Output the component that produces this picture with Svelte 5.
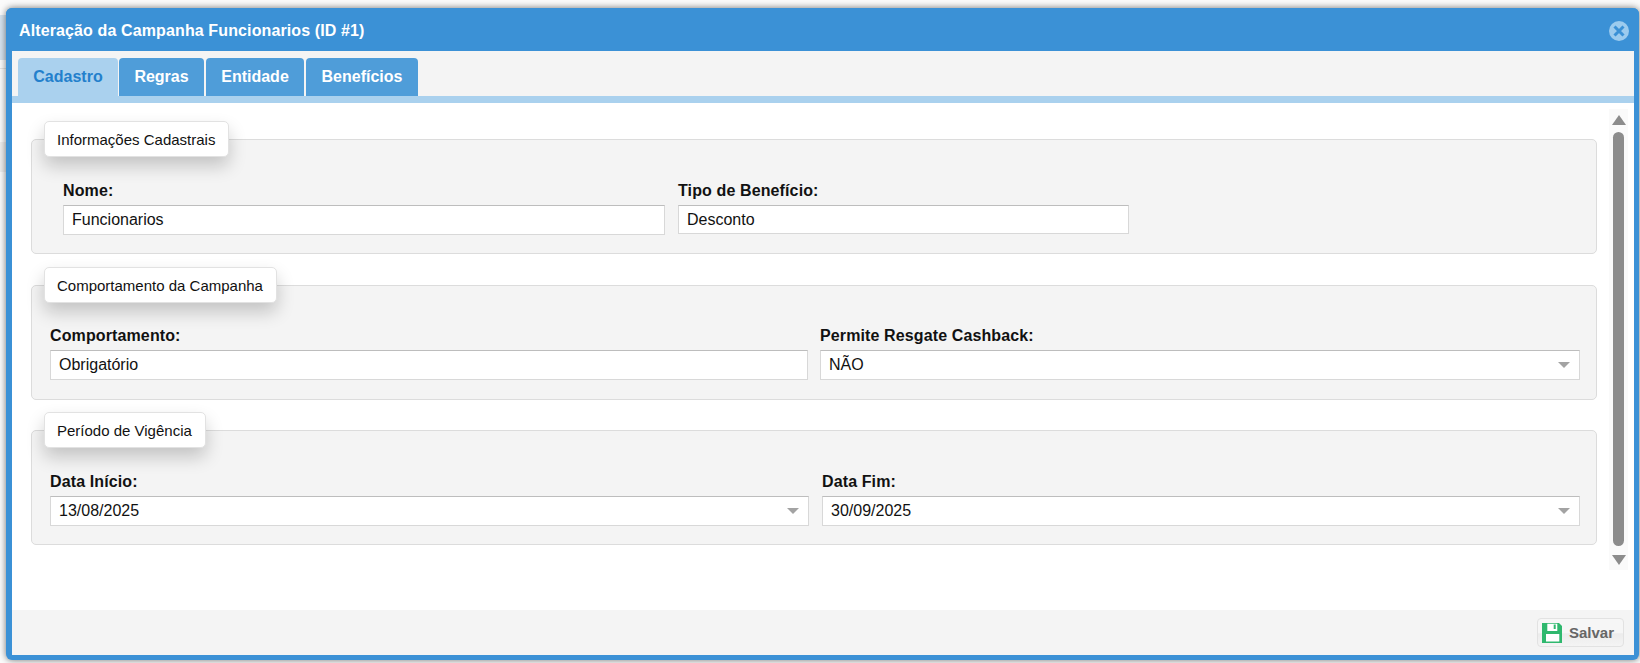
<script lang="ts">
  const tabs = ["Cadastro", "Regras", "Entidade", "Benefícios"];
  let active = $state("Cadastro");
</script>

<div class="page">
  <div class="backdrop left" aria-hidden="true">
    <i class="b1"></i><i class="b2"></i><i class="b3"></i>
  </div>
  <section class="dialog">
    <header class="title-bar">
      <span>Alteração da Campanha Funcionarios (ID #1)</span>
      <button class="close" aria-label="Fechar">
        <svg viewBox="0 0 20 20" width="20" height="20">
          <circle cx="10" cy="10" r="10" fill="#9ccbee" />
          <path d="M5.500 5.500l9 9M14.500 5.500l-9 9" stroke="#3b91d6" stroke-width="3" />
        </svg>
      </button>
    </header>

    <nav class="tabs">
      {#each tabs as tab}
        <button class="tab" class:active={active === tab} onclick={() => (active = tab)}>{tab}</button>
      {/each}
    </nav>

    <div class="body">
      <div class="forms">
        <div class="group first">
          <div class="legend">Informações Cadastrais</div>
          <div class="row inset">
            <div class="field nome">
              <span class="label">Nome:</span>
              <div class="input">Funcionarios</div>
            </div>
            <div class="field tipo">
              <span class="label">Tipo de Benefício:</span>
              <div class="input short">Desconto</div>
            </div>
          </div>
        </div>

        <div class="group second">
          <div class="legend">Comportamento da Campanha</div>
          <div class="row">
            <div class="field comp">
              <span class="label">Comportamento:</span>
              <div class="input">Obrigatório</div>
            </div>
            <div class="field half">
              <span class="label">Permite Resgate Cashback:</span>
              <div class="input select">NÃO<i class="caret"></i></div>
            </div>
          </div>
        </div>

        <div class="group third">
          <div class="legend">Período de Vigência</div>
          <div class="row">
            <div class="field date">
              <span class="label">Data Início:</span>
              <div class="input select">13/08/2025<i class="caret"></i></div>
            </div>
            <div class="field date-end">
              <span class="label">Data Fim:</span>
              <div class="input select">30/09/2025<i class="caret"></i></div>
            </div>
          </div>
        </div>
      </div>

      <div class="scrollbar" aria-hidden="true">
        <i class="arrow up"></i>
        <div class="thumb"></div>
        <i class="arrow down"></i>
      </div>
    </div>

    <footer class="actions">
      <button class="save">
        <svg viewBox="0 0 20 20" width="20" height="20">
          <path fill="#2fb86e" d="M0 0h17l3 3v17H0z" />
          <path fill="#fff" d="M5.300 .8h10v7.200h-10zM4 11h13.300v7.500H4z" />
          <path fill="#2fb86e" d="M11.700 1.500h2v4.500h-2z" />
        </svg>
        <span>Salvar</span>
      </button>
    </footer>
  </section>
</div>

<style>
  :global(body) {
    margin: 0;
    background: #fbfbfb;
    font-family: "Liberation Sans", Arial, sans-serif;
  }

  .page {
    height: 663px;
    box-sizing: border-box;
    padding: 8px 1px 3px 6px;
    position: relative;
    overflow: hidden;
  }

  /* what little of the page behind the dialog still shows on the left */
  .backdrop {
    position: absolute;
    left: 0;
    top: 0;
    width: 6px;
    height: 663px;
  }

  .backdrop i {
    position: absolute;
    left: 0;
    width: 6px;
  }

  .b1 { top: 15px; height: 45px; background: #d5e3ef; }
  .b2 { top: 68px; height: 1px; background: #e4e4e4; }
  .b3 { top: 142px; height: 30px; background: #eeeeee; }

  .dialog {
    position: relative;
    height: 652px;
    box-sizing: border-box;
    display: flex;
    flex-direction: column;
    border: solid #3b91d6;
    border-width: 0 5px 5px 6px;
    border-radius: 6px;
    background: #fff;
    box-shadow: 0 0 7px rgba(0, 0, 0, 0.55);
  }

  .title-bar {
    height: 43px;
    box-sizing: border-box;
    margin: 0 -5px 0 -6px;
    padding: 3px 10px 0 13px;
    display: flex;
    align-items: center;
    justify-content: space-between;
    background: #3b91d6;
    border-radius: 6px 6px 0 0;
    color: #fff;
    font-size: 16px;
    font-weight: bold;
    letter-spacing: 0.12px;
  }

  .close {
    display: block;
    width: 20px;
    height: 20px;
    padding: 0;
    border: 0;
    background: none;
  }

  .tabs {
    height: 45px;
    box-sizing: border-box;
    padding: 7px 0 0 6px;
    display: flex;
    gap: 1px;
    background: #f4f4f4;
  }

  .tab {
    padding: 0;
    border: 0;
    border-radius: 4px 4px 0 0;
    background: #4f9dd9;
    color: #fff;
    font: bold 16px "Liberation Sans", Arial, sans-serif;
  }

  .tab:nth-child(1) { width: 100px; }
  .tab:nth-child(2) { width: 85px; }
  .tab:nth-child(3) { width: 98px; margin-left: 1px; }
  .tab:nth-child(4) { width: 112px; margin-left: 1px; }

  .tab.active {
    background: #aad1ee;
    color: #2380cc;
  }

  .body {
    height: 514px;
    box-sizing: border-box;
    border-top: 7px solid #aad1ee;
    display: flex;
  }

  .forms {
    width: 1585px;
    box-sizing: border-box;
    padding-left: 19px;
  }

  .group {
    width: 1566px;
    height: 115px;
    box-sizing: border-box;
    margin-top: 31px;
    border: 1px solid #dcdcdc;
    border-radius: 5px;
    background: #f4f4f4;
  }

  .group.first {
    margin-top: 36px;
  }

  .group.third {
    margin-top: 30px;
  }

  .legend {
    width: fit-content;
    height: 36px;
    box-sizing: border-box;
    margin: -19px 0 0 12px;
    padding: 0 13px 0 12px;
    display: flex;
    align-items: center;
    border: 1px solid #e2e2e2;
    border-radius: 5px;
    background: #fff;
    box-shadow: 0 9px 18px rgba(0, 0, 0, 0.2);
    font-size: 15px;
    color: #111;
  }

  .row {
    display: flex;
    gap: 12px;
    padding: 25px 0 0 18px;
  }

  .row.inset {
    gap: 13px;
    padding-left: 31px;
  }

  .group.second .row {
    padding-top: 24px;
  }

  .group.third .row {
    gap: 13px;
  }

  .field {
    display: flex;
    flex-direction: column;
    gap: 5px;
  }

  .nome { width: 602px; }
  .tipo { width: 451px; }
  .comp { width: 758px; }
  .half { width: 760px; }
  .date { width: 759px; }
  .date-end { width: 758px; }

  .label {
    font-size: 16px;
    font-weight: bold;
    line-height: 18px;
    letter-spacing: 0.12px;
    color: #111;
  }

  .input {
    height: 30px;
    box-sizing: border-box;
    padding: 0 9px 0 8px;
    display: flex;
    align-items: center;
    justify-content: space-between;
    border: 1px solid #d8d8d8;
    border-top-color: #bdbdbd;
    background: #fff;
    font-size: 16px;
    color: #111;
  }

  .input.short {
    height: 29px;
  }

  .caret {
    width: 0;
    height: 0;
    border: solid transparent;
    border-width: 6px 6px 0;
    border-top-color: #a3a3a3;
  }

  .scrollbar {
    width: 19px;
    height: 461px;
    margin: 6px 0 0 12px;
    display: flex;
    flex-direction: column;
    align-items: center;
    background: #fafafa;
  }

  .arrow {
    width: 0;
    height: 0;
    border: solid transparent;
  }

  .arrow.up {
    margin-top: 6px;
    border-width: 0 7px 10px;
    border-bottom-color: #8c8c8c;
  }

  .arrow.down {
    margin-top: 9px;
    border-width: 10px 7px 0;
    border-top-color: #8c8c8c;
  }

  .thumb {
    width: 11px;
    height: 414px;
    margin-top: 7px;
    border-radius: 6px;
    background: #8c8c8c;
  }

  .actions {
    flex: 1;
    display: flex;
    justify-content: flex-end;
    align-items: flex-start;
    padding: 8px 10px 0 0;
    background: #f4f4f4;
  }

  .save {
    width: 87px;
    height: 29px;
    padding: 0 0 0 4px;
    display: flex;
    align-items: center;
    gap: 7px;
    border: 1px solid #e2e2e2;
    border-radius: 4px;
    background: linear-gradient(#f6f6f6 50%, #ececec 55%, #f4f4f4);
    color: #666;
    font: bold 15px "Liberation Sans", Arial, sans-serif;
  }

  .save span {
    margin-top: -1px;
  }
</style>
